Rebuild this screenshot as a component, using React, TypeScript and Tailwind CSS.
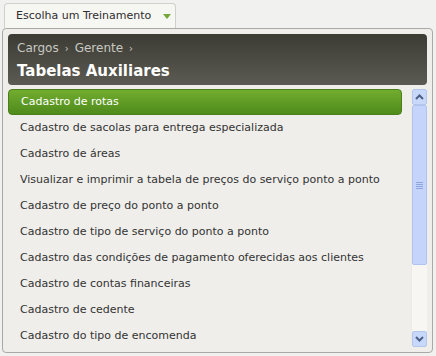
const items = [
  'Cadastro de rotas',
  'Cadastro de sacolas para entrega especializada',
  'Cadastro de áreas',
  'Visualizar e imprimir a tabela de preços do serviço ponto a ponto',
  'Cadastro de preço do ponto a ponto',
  'Cadastro de tipo de serviço do ponto a ponto',
  'Cadastro das condições de pagamento oferecidas aos clientes',
  'Cadastro de contas financeiras',
  'Cadastro de cedente',
  'Cadastro do tipo de encomenda',
];

function Chevron({ up }: { up?: boolean }) {
  return (
    <svg width="9" height="6" viewBox="0 0 9 6">
      <path
        d={up ? 'M1 5 L4.5 1.5 L8 5' : 'M1 1 L4.5 4.5 L8 1'}
        fill="none"
        stroke="#4d6185"
        strokeWidth="2"
      />
    </svg>
  );
}

export default function App() {
  return (
    <div
      className="w-[436px] h-[356px] bg-[#f1f1ef] overflow-hidden text-[#333]"
      style={{ fontFamily: 'Tahoma, "DejaVu Sans", sans-serif' }}
    >
      {/* Trigger */}
      <div className="pt-[3px] pl-[4px]">
        <div className="w-[172px] h-[25px] flex items-center gap-[12px] pl-[11px] border border-[#cfcfcb] border-b-0 rounded-t-[4px] bg-[#f6f6f3] text-[11px] text-[#2e2e2e] whitespace-nowrap">
          <span>Escolha um Treinamento</span>
          <span className="w-0 h-0 border-l-[4px] border-r-[4px] border-t-[5px] border-l-transparent border-r-transparent border-t-[#74a83a]" />
        </div>
      </div>

      {/* Panel */}
      <div className="mx-[2px] w-[431px] h-[325px] border border-[#a9a9a6] rounded-[4px] bg-[#efeeea] p-[5px] flex flex-col gap-[4px]">
        {/* Header */}
        <div className="h-[51px] rounded-[4px] bg-gradient-to-b from-[#3c3c35] to-[#5b5b53] px-[9px] pt-[6px] flex flex-col">
          <div className="flex items-center gap-[6px] text-[12px] text-[#c8c8c2] h-[16px]">
            <span>Cargos</span>
            <span className="text-[10px]">›</span>
            <span>Gerente</span>
            <span className="text-[10px]">›</span>
          </div>
          <div className="mt-[6px] text-[15px] font-bold text-white leading-[18px]">Tabelas Auxiliares</div>
        </div>

        {/* List + scrollbar */}
        <div className="flex flex-1 min-h-0">
          <div className="flex-1 flex flex-col">
            {items.map((t, i) => (
              <div
                key={t}
                className={
                  i === 0
                    ? 'h-[26px] shrink-0 flex items-center pl-[12px] rounded-[4px] bg-gradient-to-b from-[#72ac2f] to-[#4f8b1c] border border-[#4a7f1c] text-white text-[11px]'
                    : 'h-[26px] shrink-0 flex items-center pl-[12px] text-[11px] text-[#333]'
                }
              >
                {t}
              </div>
            ))}
          </div>
          <div className="w-[16px] ml-[9px] h-[258px] bg-[#f7f6f2] border-l border-[#ecebe6] flex flex-col">
            <div className="h-[16px] flex items-center justify-center bg-[#c8d8fa] border border-[#b4c6ec] rounded-[2px]">
              <Chevron up />
            </div>
            <div className="h-[160px] bg-[#c4d4fb] border border-[#b0c3ee] rounded-[2px] flex items-center justify-center">
              <div className="flex flex-col gap-[1px]">
                <div className="w-[7px] h-[1px] bg-[#8ea6dc]" />
                <div className="w-[7px] h-[1px] bg-[#8ea6dc]" />
                <div className="w-[7px] h-[1px] bg-[#8ea6dc]" />
                <div className="w-[7px] h-[1px] bg-[#8ea6dc]" />
              </div>
            </div>
            <div className="flex-1" />
            <div className="h-[16px] flex items-center justify-center bg-[#c8d8fa] border border-[#b4c6ec] rounded-[2px]">
              <Chevron />
            </div>
          </div>
        </div>
      </div>
    </div>
  );
}
